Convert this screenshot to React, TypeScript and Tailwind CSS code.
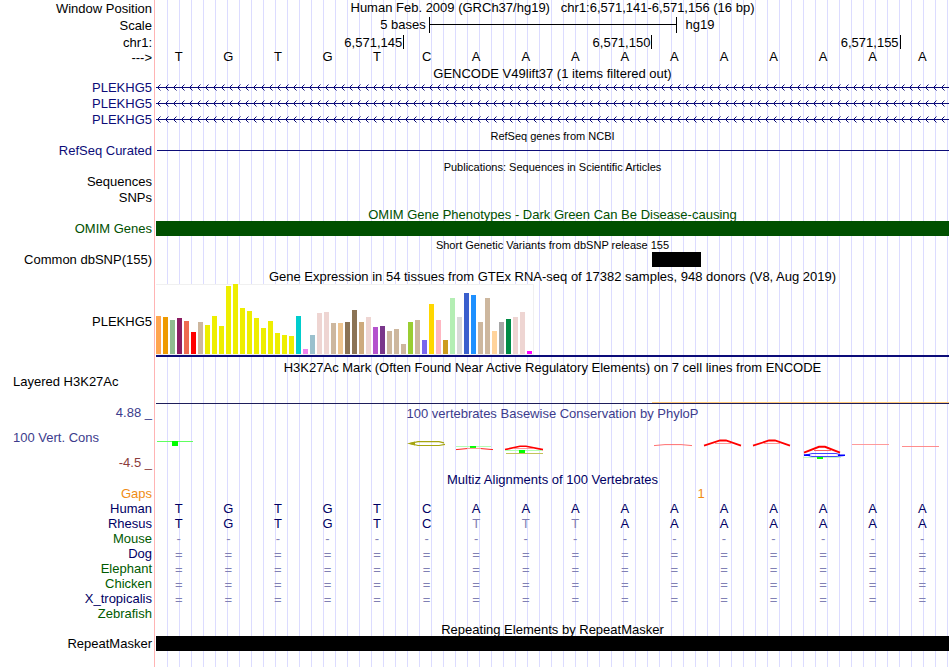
import type { ReactNode } from "react";
import clsx from "clsx";

type RowProps = {
  label?: ReactNode;
  labelClass?: string;
  className?: string;
  children?: ReactNode;
};

type Species = {
  name: string;
  color: string;
  bases: string;
  muted?: number[];
};

const REFERENCE = "TGTGTCAAAAAAAAAA";

const TICKS = ["6,571,145", "6,571,150", "6,571,155"];

const SPECIES: Species[] = [
  { name: "Human", color: "text-[#000064]", bases: REFERENCE },
  { name: "Rhesus", color: "text-[#000064]", bases: "TGTGTCTTTAAAAAAA", muted: [6, 7, 8] },
  { name: "Mouse", color: "text-[#005a00]", bases: "----------------" },
  { name: "Dog", color: "text-[#000064]", bases: "================" },
  { name: "Elephant", color: "text-[#005a00]", bases: "================" },
  { name: "Chicken", color: "text-[#005a00]", bases: "================" },
  { name: "X_tropicalis", color: "text-[#000064]", bases: "================" },
  { name: "Zebrafish", color: "text-[#005a00]", bases: "" },
];

// [height, colour] for each GTEx tissue
const TISSUES: [number, string][] = [
  [38, "#ffa54f"],
  [37, "#ee9a00"],
  [34, "#8fbc8f"],
  [36, "#8b1c62"],
  [33, "#ee6a50"],
  [22, "#ff0000"],
  [32, "#cdb79e"],
  [29, "#eeee00"],
  [38, "#eeee00"],
  [28, "#eeee00"],
  [68, "#eeee00"],
  [70, "#eeee00"],
  [46, "#eeee00"],
  [43, "#eeee00"],
  [36, "#eeee00"],
  [26, "#eeee00"],
  [33, "#eeee00"],
  [21, "#eeee00"],
  [19, "#eeee00"],
  [18, "#eeee00"],
  [38, "#00cdcd"],
  [5, "#ee82ee"],
  [19, "#9ac0cd"],
  [41, "#eed5d2"],
  [42, "#eed5d2"],
  [31, "#cdb79e"],
  [31, "#eec591"],
  [32, "#8b7355"],
  [44, "#8b7355"],
  [32, "#cdaa7d"],
  [37, "#eed5d2"],
  [27, "#b452cd"],
  [28, "#7a378b"],
  [23, "#cdb79e"],
  [25, "#cdb79e"],
  [10, "#cdb79e"],
  [32, "#9acd32"],
  [34, "#cdb79e"],
  [14, "#7a67ee"],
  [50, "#ffd700"],
  [34, "#ffb6c1"],
  [14, "#cd9b1d"],
  [56, "#b4eeb4"],
  [37, "#d9d9d9"],
  [61, "#3a5fcd"],
  [59, "#1e90ff"],
  [32, "#cdb79e"],
  [56, "#cdb79e"],
  [23, "#ffd39b"],
  [32, "#a6a6a6"],
  [35, "#008b45"],
  [37, "#eed5d2"],
  [42, "#eed5d2"],
  [3, "#ff00ff"],
];

function Row({ label, labelClass, className, children }: RowProps) {
  return (
    <div className={clsx("flex", className ?? "h-4")}>
      <div className={clsx("w-[153px] shrink-0 pr-px text-right leading-[15px] whitespace-pre", labelClass)}>
        {label}
      </div>
      <div className="mx-px min-w-0 flex-1 border-l border-[#ffb4b4] bg-[repeating-linear-gradient(to_right,transparent_0_11px,#dcdcff_11px_12px)] bg-origin-content bg-no-repeat pl-px">
        {children}
      </div>
    </div>
  );
}

function TitleRow({ small, className, children }: { small?: boolean; className?: string; children: ReactNode }) {
  return (
    <Row className="h-[15px]">
      <h2
        className={clsx(
          "text-center whitespace-pre",
          small ? "text-[11px] leading-4" : "leading-[17px]",
          className,
        )}
      >
        {children}
      </h2>
    </Row>
  );
}

function Bases({ bases, muted = [], className }: { bases: string; muted?: number[]; className?: string }) {
  return (
    <div
      className={clsx(
        "grid grid-cols-16 text-center",
        bases.startsWith("=") ? "leading-[17px]" : "leading-[15px]",
        className,
      )}
    >
      {bases.split("").map((base, i) => (
        <span
          key={i}
          className={clsx("pr-1", (muted.includes(i) || base === "-" || base === "=") && "text-[#8080b4]")}
        >
          {base}
        </span>
      ))}
    </div>
  );
}

function GeneArrows({ id }: { id: string }) {
  return (
    <svg className="block h-4 w-full" aria-hidden="true">
      <defs>
        <pattern id={id} width="8" height="16" patternUnits="userSpaceOnUse">
          <path d="M4.5 4.5 1.5 7.5 4.5 10.5" fill="none" stroke="#0c0c78" strokeWidth="1" />
        </pattern>
      </defs>
      <rect width="100%" height="16" fill={`url(#${id})`} />
      <rect y="7" width="100%" height="1" fill="#0c0c78" />
    </svg>
  );
}

function ExpressionChart() {
  return (
    <div className="flex h-full flex-col pt-px">
      <div className="flex h-[71px] w-[378px] items-end gap-[2px] border-r border-b border-[#f0f0f0] bg-white shadow-[inset_0_1px_#f0f0f0]">
        {TISSUES.map(([height, color], i) => (
          <div key={i} className="w-[5px] shrink-0" style={{ height, backgroundColor: color }} />
        ))}
      </div>
      <div className="h-[2px] bg-[#0c0c78]" />
    </div>
  );
}

function ConservationPlot() {
  return (
    <svg className="block h-[49px] w-full" viewBox="0 0 793 49" preserveAspectRatio="none" fill="none" aria-hidden="true">
      <path d="M1 19.5H37" stroke="#60ff60" />
      <path d="M16 19h6v5h-6z" fill="#00ff00" />

      <path d="M288 20.8 283 19.6H262L254 21.5 262 23.5H283L289 22.4" stroke="#a5a50f" strokeWidth="1.2" />
      <path d="M251 21.5 259 19.5V23.5z" fill="#a5a50f" />

      <path d="M300 24.5H335" stroke="#b4ffb4" />
      <path d="M314 24h6v2h-6z" fill="#00ff00" />
      <path d="M300 27.6 311 26.6M325 26.6 337 27.6" stroke="#ff2020" />
      <path d="M311 26.4H325" stroke="#ff9090" />

      <path d="M349 27.6 364 24.3H370L387 27.6" stroke="#ff0000" strokeWidth="1.6" />
      <path d="M358 26.5H377" stroke="#ff7070" strokeWidth="0.7" />
      <path d="M349 28.5H386" stroke="#b4ffb4" />
      <path d="M363 28h6v3h-6z" fill="#00ff00" />
      <path d="M350 31.5H387" stroke="#c3c35a" />

      <path d="M498 23.6 509 22.6H525L536 23.6" stroke="#ff6060" strokeWidth="0.9" />

      <path d="M548 23.6 564 18.5H570L585 23.6" stroke="#ff0000" strokeWidth="1.8" />
      <path d="M559 21.5H575" stroke="#ff8080" strokeWidth="0.8" />

      <path d="M597 23.6 613 18.5H619L634 23.6" stroke="#ff0000" strokeWidth="1.8" />
      <path d="M608 21.5H624" stroke="#ff8080" strokeWidth="0.8" />

      <path d="M648 30.6 663 24.8H669L684 30.6" stroke="#ff0000" strokeWidth="2" />
      <path d="M658 28.5H675" stroke="#ff6060" />
      <path d="M684 32.6 680 31.5H656L650 33 656 34.5H680L688 33.6" stroke="#3030ff" strokeWidth="0.9" />
      <path d="M648 32.3h6v1.6h-6zM682 32.5h7v1.6h-7z" fill="#0000ff" />
      <path d="M647 35.5H685" stroke="#b4ffb4" strokeWidth="0.8" />
      <path d="M661 35h6v2h-6z" fill="#00ff00" />

      <path d="M696 22.5H733" stroke="#ff9090" strokeWidth="0.9" />
      <path d="M746 24.5H783" stroke="#ff8080" strokeWidth="0.9" />
    </svg>
  );
}

export default function App() {
  return (
    <main className="bg-white font-['Liberation_Sans',Arial,sans-serif] text-[13px] text-black">
      <Row label="Window Position" labelClass="pt-px" className="h-[17px]">
        <h1 className="text-center leading-[15px] whitespace-pre">
          Human Feb. 2009 (GRCh37/hg19)   chr1:6,571,141-6,571,156 (16 bp)
        </h1>
      </Row>

      <Row label="Scale" labelClass="pt-px" className="h-[17px]">
        <div className="flex leading-[15px]">
          <div className="w-[34.4%] pr-[3px] text-right">5 bases</div>
          <div className="flex h-4 w-[31.25%] flex-col border-x border-black pt-[7px]">
            <div className="h-px bg-black" />
          </div>
          <div className="pl-[9px]">hg19</div>
        </div>
      </Row>

      <Row label="chr1:" labelClass="pt-px" className="h-[15px]">
        <div className="flex pt-px leading-[15px]">
          {TICKS.map((tick) => (
            <div key={tick} className="h-[14px] w-[31.3%] border-r border-black pr-px text-right">
              {tick}
            </div>
          ))}
        </div>
      </Row>

      <Row label="--->" labelClass="pt-px">
        <Bases bases={REFERENCE} />
      </Row>

      <TitleRow>GENCODE V49lift37 (1 items filtered out)</TitleRow>
      {["transcript-a", "transcript-b", "transcript-c"].map((id) => (
        <Row key={id} label="PLEKHG5" labelClass="text-[#0c0c78]">
          <GeneArrows id={id} />
        </Row>
      ))}

      <TitleRow small>RefSeq genes from NCBI</TitleRow>
      <Row label="RefSeq Curated" labelClass="text-[#0c0c78]">
        <div className="pt-[7px] pl-px">
          <div className="h-px bg-[#0c0c78]" />
        </div>
      </Row>

      <TitleRow small>Publications: Sequences in Scientific Articles</TitleRow>
      <Row label="Sequences" />
      <Row label="SNPs" />

      <TitleRow className="text-[#005000]">OMIM Gene Phenotypes - Dark Green Can Be Disease-causing</TitleRow>
      <Row label="OMIM Genes" labelClass="text-[#005000]">
        <div className="h-[15px] bg-[#005000]" />
      </Row>

      <TitleRow small>Short Genetic Variants from dbSNP release 155</TitleRow>
      <Row label="Common dbSNP(155)">
        <div className="ml-[62.5%] h-[15px] w-1/16 bg-black" />
      </Row>

      <TitleRow>Gene Expression in 54 tissues from GTEx RNA-seq of 17382 samples, 948 donors (V8, Aug 2019)</TitleRow>
      <Row label="PLEKHG5" labelClass="pt-[31px]" className="h-[76px]">
        <ExpressionChart />
      </Row>

      <TitleRow>H3K27Ac Mark (Often Found Near Active Regulatory Elements) on 7 cell lines from ENCODE</TitleRow>
      <Row
        label={<span className="block pl-[13px] text-left">Layered H3K27Ac</span>}
        className="h-[31px]"
      >
        <div className="pt-7">
          <div className="ml-[62.5%] h-px bg-[#ffc878]" />
          <div className="h-px bg-[#1e1e5a]" />
        </div>
      </Row>

      <Row
        label={
          <div className="flex h-full flex-col gap-[10px]">
            <span>4.88 _</span>
            <span className="pl-[13px] text-left">100 Vert. Cons</span>
            <span className="text-[#8c3c3c]">-4.5 _</span>
          </div>
        }
        labelClass="text-[#3c3c8c]"
        className="h-[66px]"
      >
        <h2 className="text-center leading-[17px] text-[#3c3c8c]">100 vertebrates Basewise Conservation by PhyloP</h2>
        <ConservationPlot />
      </Row>

      <TitleRow className="text-[#000064]">Multiz Alignments of 100 Vertebrates</TitleRow>
      <Row label="Gaps" labelClass="text-[#f08c14]" className="h-[15px]">
        <div className="grid grid-cols-32 text-center leading-[15px] text-[#f08c14]">
          <span className="col-span-2 col-start-22">1</span>
        </div>
      </Row>
      {SPECIES.map((s) => (
        <Row key={s.name} label={s.name} labelClass={s.color} className="h-[15px]">
          <Bases bases={s.bases} muted={s.muted} className="text-[#000064]" />
        </Row>
      ))}

      <TitleRow>Repeating Elements by RepeatMasker</TitleRow>
      <Row label="RepeatMasker">
        <div className="h-[15px] bg-black" />
      </Row>
      <Row className="h-[15px]" />
    </main>
  );
}
